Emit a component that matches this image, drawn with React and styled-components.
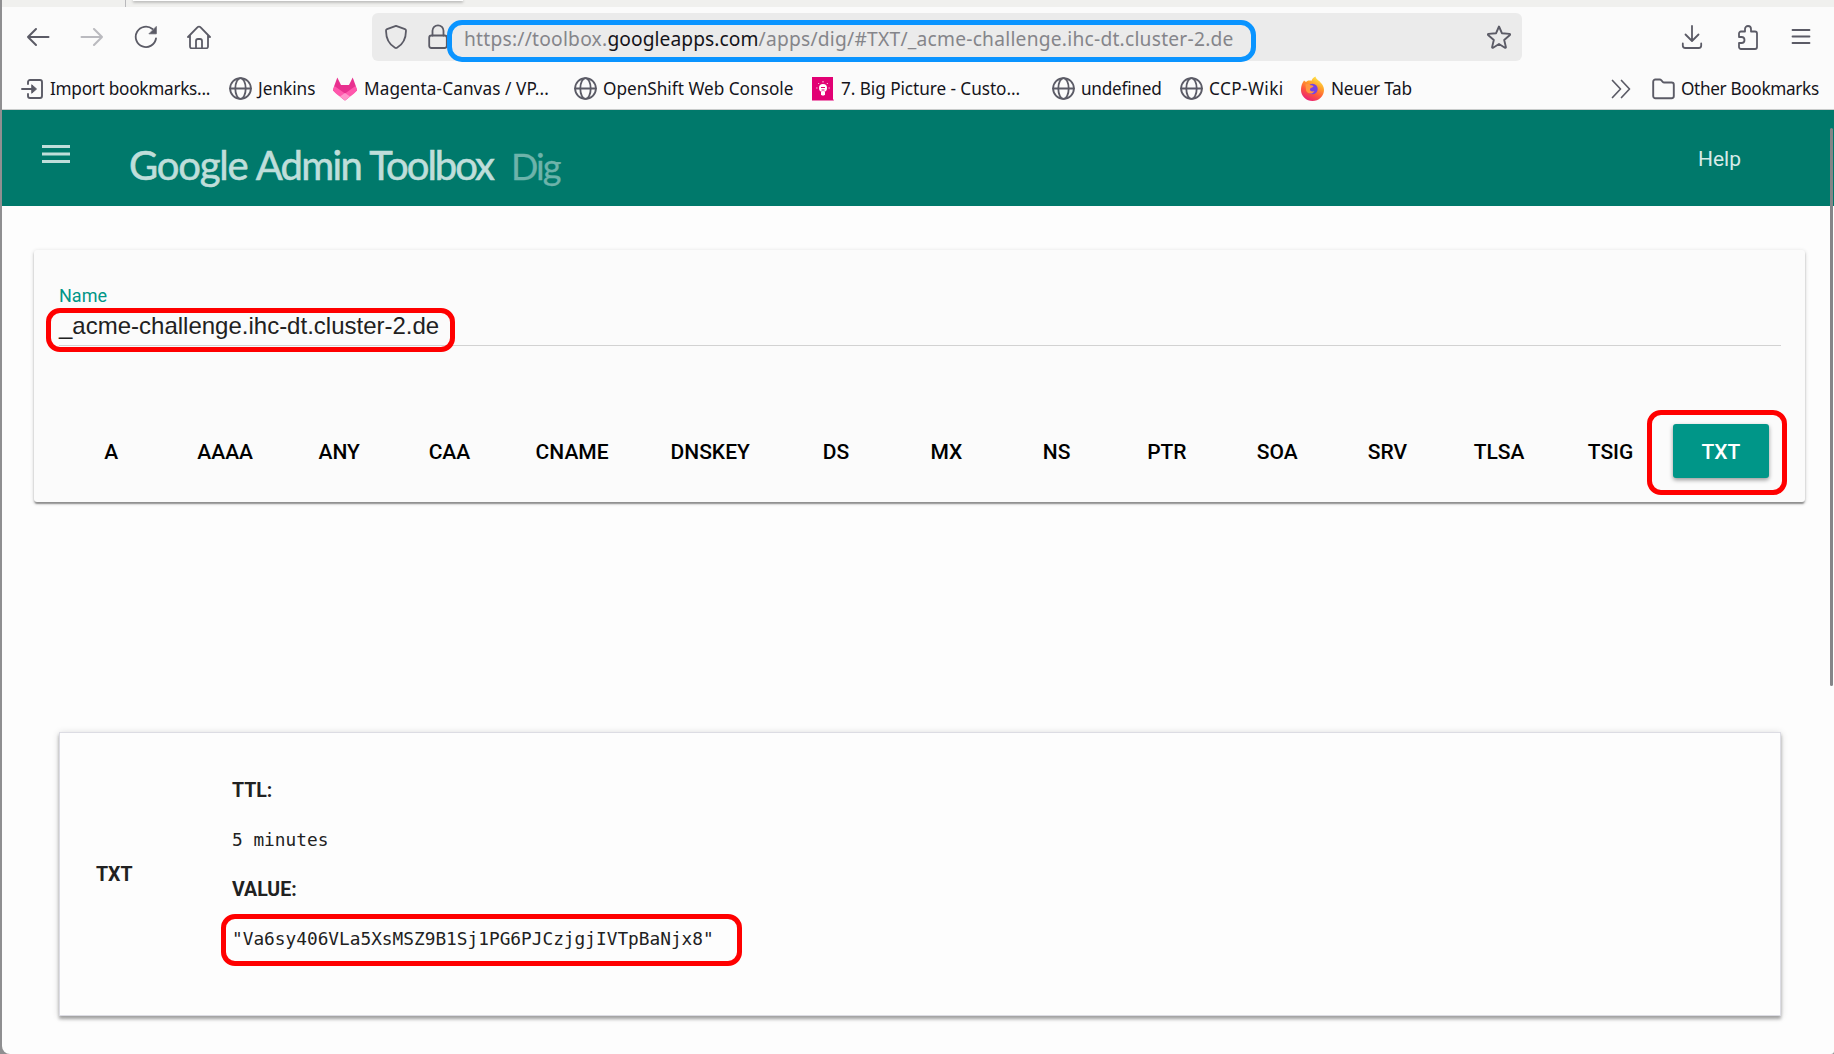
import React from "react";
import styled, { createGlobalStyle } from "styled-components";

const Global = createGlobalStyle`
  *, *::before, *::after { box-sizing: border-box; }
  html, body { margin: 0; padding: 0; background: #8f8f91; }
  body { width: 1834px; height: 1054px; overflow: hidden; }
`;

const ui = `"Noto Sans", "Open Sans", sans-serif`;
const roboto = `Roboto, "Liberation Sans", sans-serif`;

const Window = styled.div`
  position: relative;
  display: flex;
  flex-direction: column;
  height: 1054px;
  margin-left: 2px;
  background: #fdfdfd;
  border-radius: 0 0 3px 8px;
  overflow: hidden;
`;

const TabStrip = styled.div`
  display: flex;
  flex: none;
  height: 7px;
  background: #f0f0ee;
`;

const InactiveTab = styled.div`
  width: 124px;
  border-right: 1px solid #b9b9bc;
`;

const ActiveTab = styled.div`
  width: 330px;
  height: 1px;
  margin-left: 7px;
  background: #ffffff;
  box-shadow: 0 1px 3px rgba(0, 0, 0, 0.6);
`;

const NavBar = styled.div`
  display: flex;
  flex: none;
  align-items: center;
  height: 60px;
  padding-left: 22px;
  background: #fbfbfb;
  color: #5b5b66;
`;

const NavButton = styled.span`
  display: flex;
  flex: none;
  align-items: center;
  justify-content: center;
  width: 28px;
  height: 28px;
  margin-right: ${(p) => p.$gap || 0}px;
  opacity: ${(p) => (p.$disabled ? 0.4 : 1)};
`;

const AddressBar = styled.div`
  display: flex;
  flex: none;
  align-items: center;
  width: 1150px;
  height: 48px;
  margin: 0 156px 0 159px;
  padding: 0 9px 0 10px;
  border-radius: 6px;
  background: #ebebeb;
`;

const UrlHighlight = styled.div`
  position: relative;
  display: flex;
  align-items: center;
  width: 809px;
  height: 42px;
  margin: 8px auto 0 -5px;
  padding-left: 12px;
  padding-bottom: 5px;
  border: 5px solid #0a94ff;
  border-radius: 15px;
`;

const Url = styled.span`
  color: #85858a;
  font: 19.2px/26px ${ui};
  letter-spacing: 0.24px;
  white-space: nowrap;
`;

const Host = styled.span`
  color: #15141a;
  letter-spacing: 0.08px;
`;

const BookmarksBar = styled.div`
  display: flex;
  flex: none;
  align-items: center;
  height: 43px;
  padding: 1px 0 0 19px;
  border-bottom: 1px solid #c9cccb;
  background: #fbfbfb;
  color: #5b5b66;
`;

const Bookmark = styled.div`
  display: flex;
  flex: none;
  align-items: center;
  width: ${(p) => p.$w}px;
  gap: ${(p) => p.$gap ?? 6}px;
  svg { flex: none; }
`;

const BookmarkLabel = styled.span`
  color: #15141a;
  font: 17.2px/24px ${ui};
  letter-spacing: ${(p) => p.$ls || 0}px;
  white-space: nowrap;
`;

const Overflow = styled.span`
  display: flex;
  margin-left: auto;
  margin-right: 21px;
`;

const Header = styled.header`
  display: flex;
  flex: none;
  height: 96px;
  padding: 0 93px 0 40px;
  background: #00796b;
`;

const MenuButton = styled.span`
  display: flex;
  width: 87px;
  padding-top: 35px;
`;

const Brand = styled.h1`
  width: 382px;
  margin: 31px 0 0;
  color: #bfdeda;
  font: 400 40px/48px Lato, sans-serif;
  word-spacing: -2px;
  -webkit-text-stroke: 0.6px #bfdeda;
  white-space: nowrap;
`;

const BrandWord = styled.span`
  letter-spacing: ${(p) => p.$ls}px;
`;

const Product = styled.span`
  margin: 32px auto 0 0;
  color: #6db3aa;
  font: 400 36px/48px Lato, sans-serif;
  letter-spacing: -1.9px;
  -webkit-text-stroke: 0.3px #6db3aa;
`;

const Help = styled.a`
  margin-top: 35px;
  color: #d6ebe8;
  font: 400 21px/28px ${roboto};
`;

const Content = styled.main`
  display: flex;
  flex-direction: column;
  padding: 44px 29px 0 32px;
`;

const QueryCard = styled.section`
  display: flex;
  flex-direction: column;
  height: 252px;
  padding: 34px 24px 0 25px;
  border-radius: 3px;
  background: #fbfbfb;
  box-shadow: 0 2px 2px rgba(0, 0, 0, 0.26), 0 1px 4px rgba(0, 0, 0, 0.16), 0 3px 1px -1px rgba(0, 0, 0, 0.16);
`;

const FieldLabel = styled.label`
  color: #009688;
  font: 400 18px/24px ${roboto};
`;

const Field = styled.div`
  height: 38px;
  border-bottom: 1px solid #d2d2d2;
`;

const Highlight = styled.div`
  position: relative;
  display: flex;
  flex: none;
  align-items: center;
  width: ${(p) => p.$w}px;
  height: ${(p) => p.$h}px;
  margin: ${(p) => p.$margin};
  padding: ${(p) => p.$pad || "0"};
  border: 5px solid #ff0000;
  border-radius: 14px;
`;

const Value = styled.span`
  color: #212121;
  font: 24px/28px "Liberation Sans", Arial, sans-serif;
`;

const TypeRow = styled.div`
  display: flex;
  align-items: center;
  margin: 64px 0 0 -3px;
  height: 85px;
`;

const TypeButton = styled.span`
  display: flex;
  flex: none;
  align-items: center;
  justify-content: center;
  min-width: 96.3px;
  height: 54px;
  margin: 0 7px 3px;
  padding: 1px 24px 0;
  border-radius: 3px;
  color: ${(p) => (p.$active ? "#ffffff" : "#000000")};
  background: ${(p) => (p.$active ? "#009688" : "transparent")};
  box-shadow: ${(p) => (p.$active ? "0 2px 4px rgba(0,0,0,0.4)" : "none")};
  font: 500 21px/28px ${roboto};
`;

const ResultCard = styled.section`
  display: flex;
  height: 284px;
  margin: 230px 24px 0 25px;
  padding: 33px 0 0 36px;
  border: 1px solid #dcdce3;
  background: #fdfdfd;
  box-shadow: 0 3px 3px rgba(0, 0, 0, 0.3), 0 1px 7px rgba(0, 0, 0, 0.16);
`;

const RecordType = styled.div`
  width: 136px;
  padding-top: 95px;
  color: #212121;
  font: 700 19.5px/28px ${roboto};
`;

const RecordFields = styled.div`
  display: flex;
  flex-direction: column;
`;

const Term = styled.div`
  color: #212121;
  height: 49.5px;
  font: 700 19.5px/49.5px ${roboto};
`;

const Mono = styled.div`
  color: #212121;
  height: 49.5px;
  font: 17.8px/47.5px "DejaVu Sans Mono", monospace;
  white-space: nowrap;
`;

const Scrollbar = styled.div`
  position: absolute;
  top: 128px;
  right: 1px;
  width: 3px;
  height: 558px;
  border-radius: 2px;
  background: #858588;
`;

const Stroke = ({ w = 24, h = 24, sw = 1.7, children }) => (
  <svg width={w} height={h} viewBox={`0 0 ${w} ${h}`} fill="none" stroke="currentColor" strokeWidth={sw} strokeLinecap="round" strokeLinejoin="round">
    {children}
  </svg>
);

const Globe = () => (
  <Stroke w={23} h={23} sw={1.8}>
    <circle cx="11.5" cy="11.5" r="10.4" />
    <ellipse cx="11.5" cy="11.5" rx="5.2" ry="10.4" />
    <path d="M1 11.5h21" />
  </Stroke>
);

const types = ["A", "AAAA", "ANY", "CAA", "CNAME", "DNSKEY", "DS", "MX", "NS", "PTR", "SOA", "SRV", "TLSA", "TSIG"];

export default function App() {
  return (
    <>
      <Global />
      <Window>
        <TabStrip>
          <InactiveTab />
          <ActiveTab />
        </TabStrip>
        <NavBar>
          <NavButton $gap={26}>
            <Stroke sw={2}><path d="M22.500 12H2M10 4L2 12l8 8" /></Stroke>
          </NavButton>
          <NavButton $gap={26} $disabled>
            <Stroke sw={2}><path d="M1.500 12H22M14 4l8 8-8 8" /></Stroke>
          </NavButton>
          <NavButton $gap={25}>
            <Stroke sw={1.8}>
              <path d="M22 13.5A10.2 10.2 0 1 1 18.5 4" />
              <path d="M22.3 1.8v7h-7z" fill="currentColor" strokeWidth="0.8" />
            </Stroke>
          </NavButton>
          <NavButton>
            <Stroke sw={1.8}>
              <path d="M1 12L10.6 2.2a1.9 1.9 0 0 1 2.8 0L23 12M3 10.5v11a1.8 1.8 0 0 0 1.8 1.8h14.4a1.8 1.8 0 0 0 1.8-1.8v-11M9 23v-7a2 2 0 0 1 2-2h2a2 2 0 0 1 2 2v7" />
            </Stroke>
          </NavButton>
          <AddressBar>
            <NavButton $gap={14}>
              <Stroke w={24} h={26} sw={1.8}>
                <path d="M12 1.8l9 3.4a1.6 1.6 0 0 1 1 1.6c-.1 8-3 13.600-9 17a2 2 0 0 1-2 0C5 20.400 2.100 14.800 2 6.800a1.600 1.600 0 0 1 1-1.600z" />
              </Stroke>
            </NavButton>
            <NavButton>
              <Stroke w={20} h={26} sw={1.8}>
                <rect x="1.200" y="11.500" width="17.600" height="12.500" rx="2.200" />
                <path d="M4.500 11.500V6.800a5.500 5.500 0 0 1 11 0v4.700" />
              </Stroke>
            </NavButton>
            <UrlHighlight>
              <Url>
                https://toolbox.<Host>googleapps.com</Host>/apps/dig/#TXT/_acme-challenge.ihc-dt.cluster-2.de
              </Url>
            </UrlHighlight>
            <NavButton>
              <Stroke sw={1.9}>
                <path d="M12 1.500l2.900 6.700 7.600.7c.6.1.8.7.4 1.100l-5.700 5 1.700 7.100c.1.600-.5 1-1 .7L12 19l-5.900 3.800c-.5.300-1.100-.100-1-.7l1.700-7.100-5.700-5c-.4-.4-.2-1 .4-1.100l7.600-.7z" />
              </Stroke>
            </NavButton>
          </AddressBar>
          <NavButton $gap={28}>
            <Stroke sw={1.8}><path d="M12 0.900v15M5.500 9.500l6.500 6.500 6.500-6.500M2.800 18.500v2a2.500 2.500 0 0 0 2.500 2.500h13.400a2.500 2.500 0 0 0 2.500-2.500v-2" /></Stroke>
          </NavButton>
          <NavButton $gap={25}>
            <Stroke w={22} h={25} sw={1.8}>
              <path d="M2 8.500a2 2 0 0 1 2-2h4V4a3 3 0 0 1 6 0v2.500h4a2 2 0 0 1 2 2V22a2 2 0 0 1-2 2H4a2 2 0 0 1-2-2v-4h2.500a3 3 0 0 0 0-6H2z" />
            </Stroke>
          </NavButton>
          <NavButton>
            <Stroke sw={1.8}><path d="M3.500 5h17M3.500 11.500h17M3.500 18h17" /></Stroke>
          </NavButton>
        </NavBar>
        <BookmarksBar>
          <Bookmark $w={208} $gap={7}>
            <Stroke w={22} h={20} sw={1.9}>
              <path d="M7 5V3a2 2 0 0 1 2-2h10a2 2 0 0 1 2 2v14a2 2 0 0 1-2 2H9a2 2 0 0 1-2-2v-2M1 10h12" />
              <path d="M11 6l4.500 4-4.500 4z" fill="currentColor" strokeWidth="1" />
            </Stroke>
            <BookmarkLabel $ls={-0.27}>Import bookmarks...</BookmarkLabel>
          </Bookmark>
          <Bookmark $w={104}><Globe /><BookmarkLabel>Jenkins</BookmarkLabel></Bookmark>
          <Bookmark $w={241} $gap={7}>
            <svg width="24" height="24" viewBox="0 0 24 24">
              <path d="M4.300 0.500L1 9.500 0 13.500 12 23.500 24 13.500 23 9.500 19.700 0.500 16 8H8z" fill="#e8308f" />
              <path d="M0 12.500L1.500 9 12 16.500 22.500 9 24 12.500C23.500 15 20 17.500 12 23.500 4 17.500 .5 15 0 12.500z" fill="#ff57ac" />
              <path d="M7 19.500L12 16l5 3.500-5 4z" fill="#ff94ca" />
            </svg>
            <BookmarkLabel $ls={0.09}>Magenta-Canvas / VP...</BookmarkLabel>
          </Bookmark>
          <Bookmark $w={238}><Globe /><BookmarkLabel>OpenShift Web Console</BookmarkLabel></Bookmark>
          <Bookmark $w={240} $gap={7}>
            <svg width="22" height="24" viewBox="0 0 22 24">
              <path d="M0 0h21v22l1 1.500H0z" fill="#e20074" />
              <circle cx="11" cy="11" r="4" fill="#fff" />
              <path d="M9 15h4v2.500l-1 1h-2l-1-1z" fill="#fff" />
              <path d="M11 4v1.500M6.200 6l1 1M15.800 6l-1 1M4.200 11h1.300M16.500 11h1.300" stroke="#ffd0e6" strokeWidth="1" />
              <path d="M9 10.500h4M9.500 13h3" stroke="#e20074" strokeWidth="1" />
            </svg>
            <BookmarkLabel $ls={-0.06}>7. Big Picture - Custo...</BookmarkLabel>
          </Bookmark>
          <Bookmark $w={128}><Globe /><BookmarkLabel $ls={-0.25}>undefined</BookmarkLabel></Bookmark>
          <Bookmark $w={121}><Globe /><BookmarkLabel $ls={0.4}>CCP-Wiki</BookmarkLabel></Bookmark>
          <Bookmark $w={120} $gap={7}>
            <svg width="23" height="25" viewBox="0 0 23 25">
              <defs>
                <linearGradient id="flame" x1="0.800" y1="0" x2="0.300" y2="1">
                  <stop offset="0" stopColor="#fff44f" /><stop offset="0.350" stopColor="#ffa32b" /><stop offset="0.650" stopColor="#ff5a3a" /><stop offset="1" stopColor="#e91e7a" />
                </linearGradient>
              </defs>
              <path d="M1.500 7L3 4.500l2 1.500C6 4.500 8 4 10.500 4.800 11 3 12.500 1.500 14.500 0.500c.5 3 4 4 5.500 6.500C21.500 8.500 23 11 23 14a11.500 11 0 0 1-23 0c0-3 .5-5 1.500-7z" fill="url(#flame)" />
              <circle cx="11.500" cy="13" r="5.200" fill="#7542e5" />
              <path d="M4.500 8.500c2-.8 4-.3 5 .8 1.500 0 3 .3 3 1.200-1 1.500-3 1-3.500 2.500-.5 2 2 3 4.500 2-1.500 3.500-7 3.500-8.500-.5z" fill="#ff9640" />
            </svg>
            <BookmarkLabel $ls={-0.25}>Neuer Tab</BookmarkLabel>
          </Bookmark>
          <Overflow>
            <Stroke w={20} h={20} sw={1.7}><path d="M1.500 1.500L9.500 10l-8 8.500M10.500 1.500L18.500 10l-8 8.500" /></Stroke>
          </Overflow>
          <Bookmark $w={182}>
            <Stroke w={23} h={22} sw={1.9}>
              <path d="M1.200 3.700a2.200 2.200 0 0 1 2.200-2.200h4.300a2 2 0 0 1 1.500.7l1.500 1.600a2 2 0 0 0 1.500.7h7.400a2.200 2.200 0 0 1 2.200 2.200v11.300a2.200 2.200 0 0 1-2.200 2.200H3.400a2.200 2.200 0 0 1-2.200-2.200z" />
            </Stroke>
            <BookmarkLabel $ls={-0.34}>Other Bookmarks</BookmarkLabel>
          </Bookmark>
        </BookmarksBar>
        <Header>
          <MenuButton>
            <svg width="28" height="18" viewBox="0 0 28 18" fill="#bfdeda"><path d="M0 0h28v3H0zM0 7.500h28v3H0zM0 15h28v3H0z" /></svg>
          </MenuButton>
          <Brand>
            <BrandWord $ls={-1.2}>Google</BrandWord> <BrandWord $ls={-1.7}>Admin</BrandWord> <BrandWord $ls={-2}>Toolbox</BrandWord>
          </Brand>
          <Product>Dig</Product>
          <Help>Help</Help>
        </Header>
        <Content>
          <QueryCard>
            <FieldLabel>Name</FieldLabel>
            <Field>
              <Highlight $w={409} $h={44} $margin="0 0 0 -13px" $pad="0 0 8px 8px">
                <Value>_acme-challenge.ihc-dt.cluster-2.de</Value>
              </Highlight>
            </Field>
            <TypeRow>
              {types.map((t) => <TypeButton key={t}>{t}</TypeButton>)}
              <Highlight $w={140} $h={85} $margin="0 0 0 -19px" $pad="0 0 0 14px">
                <TypeButton $active>TXT</TypeButton>
              </Highlight>
            </TypeRow>
          </QueryCard>
          <ResultCard>
            <RecordType>TXT</RecordType>
            <RecordFields>
              <Term>TTL:</Term>
              <Mono>5 minutes</Mono>
              <Term>VALUE:</Term>
              <Highlight $w={521} $h={52} $margin="-1px 0 0 -11px" $pad="0 0 0 6px">
                <Mono>"Va6sy406VLa5XsMSZ9B1Sj1PG6PJCzjgjIVTpBaNjx8"</Mono>
              </Highlight>
            </RecordFields>
          </ResultCard>
        </Content>
        <Scrollbar />
      </Window>
    </>
  );
}
